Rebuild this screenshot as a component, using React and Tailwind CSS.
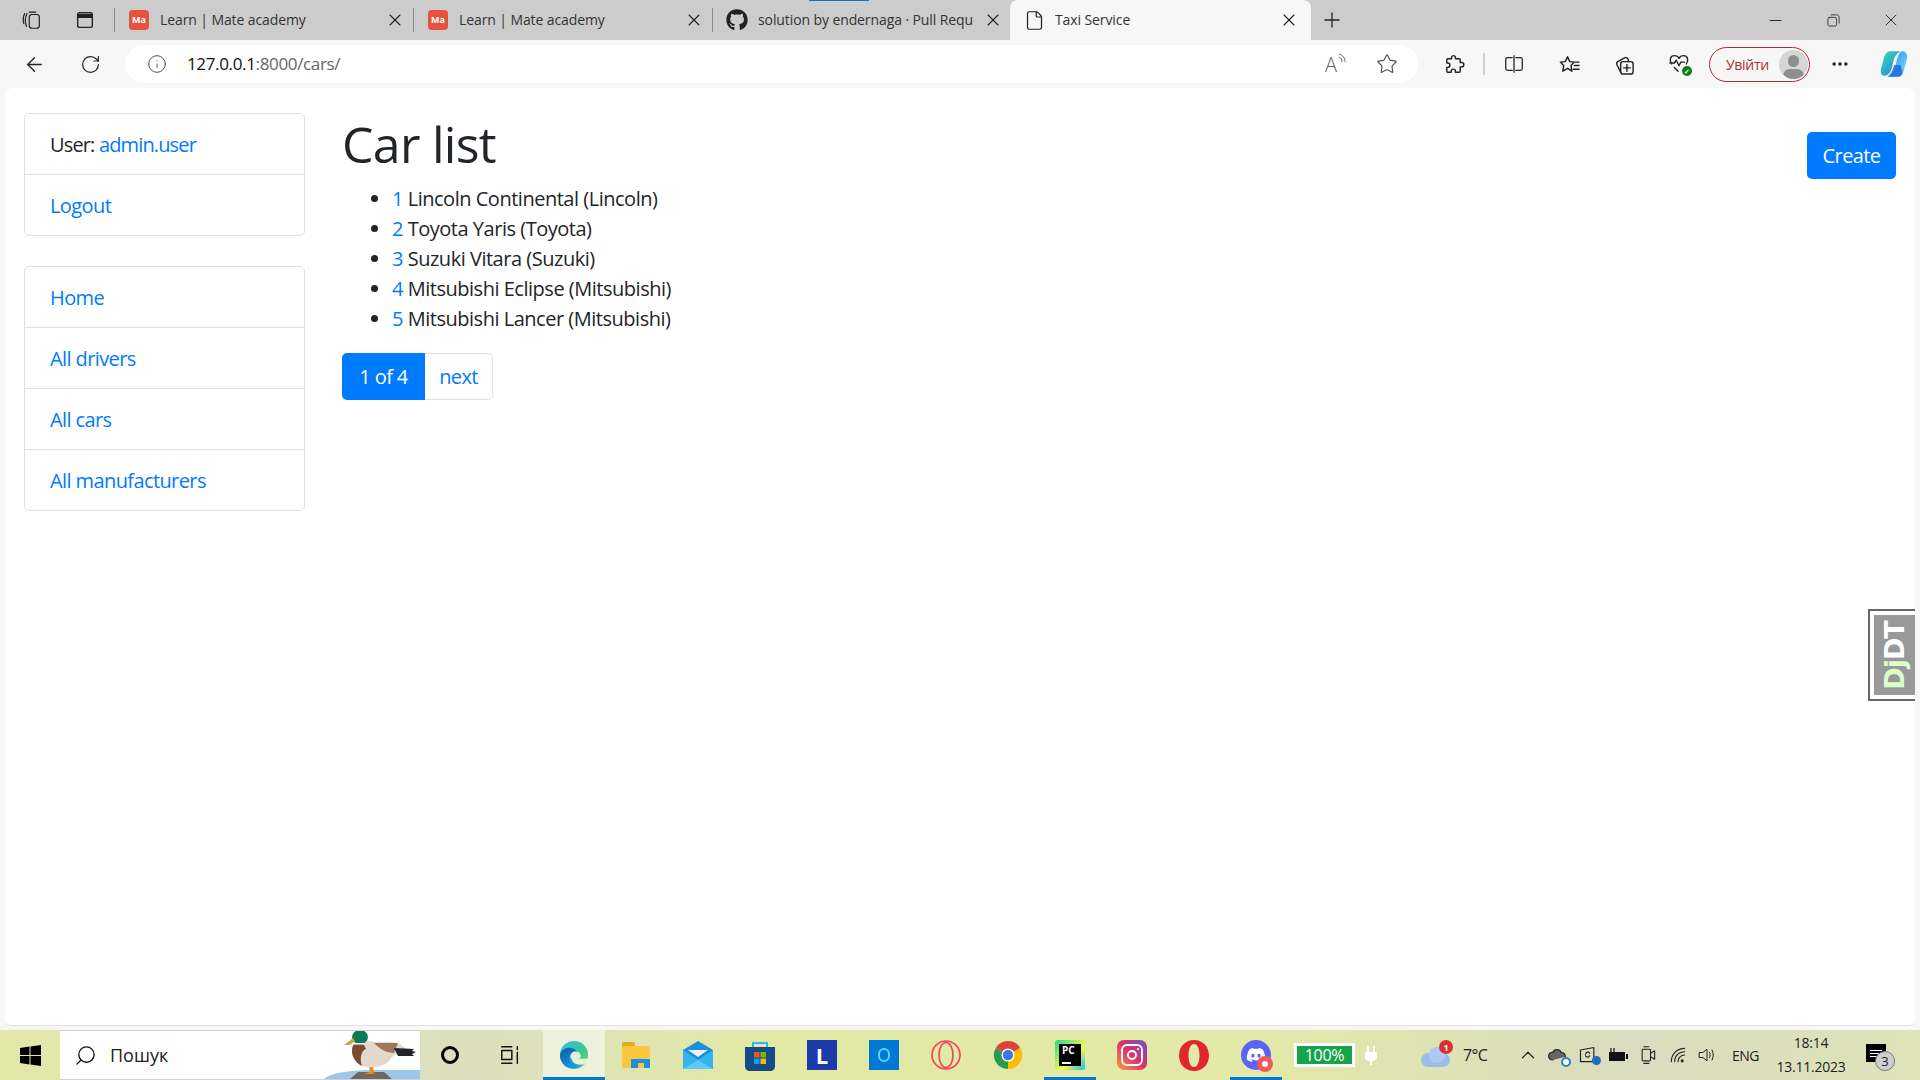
import React from 'react';
import { ArrowLeft, RotateCw, Info, Star, Plus, X, Minus, File, Search, ChevronUp, Ellipsis } from 'lucide-react';
import { FaGithub, FaDiscord } from 'react-icons/fa';

const SANS = "font-['Open_Sans',sans-serif]";
const link = 'text-[#007bff]';

function Tab({ icon, label, active, width, sep, closeGap }) {
  return (
    <div className={`relative flex h-10 items-center shrink-0 ${active ? 'bg-[#f7f7f7] rounded-t-lg' : ''}`} style={{ width }}>
      <div className="w-[24px] flex justify-center ml-[12px] shrink-0">{icon}</div>
      <span className="ml-[9px] flex-1 overflow-hidden whitespace-nowrap pb-[2px] text-[14px] tracking-[-0.1px] text-[#333]">{label}</span>
      <X size={20} strokeWidth={1.3} className="shrink-0 text-[#222]" style={{ marginRight: closeGap }} />
      {sep && <div className="absolute right-0 top-[8px] h-[24px] w-px bg-[#8a8a8a]" />}
    </div>
  );
}

const MateIcon = () => (
  <div className="flex h-[20px] w-[20px] items-center justify-center rounded-[4px] bg-[#e5533d] text-[9px] font-bold text-white">Ma</div>
);

function ToolIcon({ w = 45, children, className = '' }) {
  return <div className={`flex h-full shrink-0 items-center justify-center ${className}`} style={{ width: w }}>{children}</div>;
}

const Stroke = ({ size = 22, children, vb = 24, sw = 1.4, color = '#222' }) => (
  <svg width={size} height={size} viewBox={`0 0 ${vb} ${vb}`} fill="none" stroke={color} strokeWidth={sw} strokeLinecap="round" strokeLinejoin="round">{children}</svg>
);

function NavGroup({ items, className = '' }) {
  return (
    <div className={`flex flex-col rounded-[5px] border border-[#dfdfdf] ${className}`}>
      {items.map((it, i) => (
        <div key={i} className={`px-[25px] pt-[16px] text-[20px] leading-[30px] tracking-[-0.6px] ${i ? 'h-[61px] border-t border-[#dfdfdf]' : 'h-[60px]'}`}>{it}</div>
      ))}
    </div>
  );
}

const cars = [
  ['1', 'Lincoln Continental (Lincoln)'],
  ['2', 'Toyota Yaris (Toyota)'],
  ['3', 'Suzuki Vitara (Suzuki)'],
  ['4', 'Mitsubishi Eclipse (Mitsubishi)'],
  ['5', 'Mitsubishi Lancer (Mitsubishi)'],
];

function TaskCell({ children, active, underline, w = 62 }) {
  return (
    <div className={`relative flex h-full shrink-0 items-center justify-center ${active ? 'bg-[#eef2dc]' : ''}`} style={{ width: w }}>
      {children}
      {underline && <div className={`absolute bottom-0 h-[3px] bg-[#0078d4] ${active ? 'left-0 right-0' : 'left-[5px] right-[5px]'}`} />}
    </div>
  );
}

const Duck = () => (
  <svg className="absolute bottom-0 right-0" width="96" height="50" viewBox="0 0 96 50">
    <path d="M0 50 C8 43 30 41 50 41 L96 41 L96 50 Z" fill="#9cc6ea" />
    <path d="M26 50 L34 43 L60 43 L68 50 Z" fill="#6f6a5f" />
    <path d="M45 36 L46 43 L40 45 L50 45 L49 36 Z" fill="#f08a24" />
    <path d="M28 22 C28 11 36 9 44 12 C56 14 66 12 74 14 L84 21 C72 24 68 27 66 31 C60 39 44 40 36 36 C31 33 28 28 28 22 Z" fill="#e3d8c9" />
    <path d="M28 22 C28 15 32 12 38 12 L42 20 C36 22 36 32 38 37 C32 34 28 28 28 22 Z" fill="#7a4b32" />
    <path d="M50 14 L74 14 L70 24 C62 24 56 20 50 14Z" fill="#a0775c" />
    <path d="M70 19 L90 20 L88 22 L92 23 L88 25 L90 27 L74 27 Z" fill="#22262b" />
    <ellipse cx="36" cy="8" rx="8" ry="7" fill="#0d7a55" />
    <path d="M29 9 L20 16 L26 16 L31 12 Z" fill="#c9a83a" />
    <rect x="30" y="14" width="10" height="1.6" fill="#f5f5f5" />
  </svg>
);

const EdgeLogo = ({ size = 30 }) => (
  <svg width={size} height={size} viewBox="0 0 32 32">
    <defs>
      <linearGradient id="eg1" x1="0" y1="0" x2="1" y2="1"><stop offset="0" stopColor="#35c1f1" /><stop offset="0.6" stopColor="#36c98f" /><stop offset="1" stopColor="#7fe05a" /></linearGradient>
      <linearGradient id="eg2" x1="0" y1="0" x2="0.6" y2="1"><stop offset="0" stopColor="#0c59a4" /><stop offset="1" stopColor="#1b9de2" /></linearGradient>
    </defs>
    <circle cx="16" cy="16" r="15" fill="url(#eg1)" />
    <path d="M1 16 C3 8 13 6 18 11 C21 14 20 18 17 18 L12 18 C10 24 17 29 25 26 C20 32 9 32 4 25 C2 22 1 19 1 16Z" fill="url(#eg2)" />
    <path d="M12 18 C12 13 17 11 21 13 C24 15 24 19 21 20 L31 20 C31 21 30 24 28 25 C22 29 13 27 12 18Z" fill="#eef2dc" opacity="0.95" />
    <path d="M13 19 C14 26 22 28 27 25 C20 30 11 27 11 20Z" fill="#1b9de2" />
  </svg>
);

const Chrome = () => (
  <svg width="30" height="30" viewBox="0 0 32 32">
    <path d="M16 16 L3 8.5 A15 15 0 0 1 29 8.5 Z" fill="#db4437" />
    <path d="M16 16 L16 31 A15 15 0 0 1 3 8.5 Z" fill="#2a9a4f" />
    <path d="M16 16 L29 8.5 A15 15 0 0 1 16 31 Z" fill="#fbbc05" />
    <circle cx="16" cy="16" r="7" fill="#fff" />
    <circle cx="16" cy="16" r="5.5" fill="#3b78e7" />
  </svg>
);

const Copilot = () => (
  <svg width="30" height="30" viewBox="0 0 28 28">
    <defs>
      <linearGradient id="cp1" x1="0" y1="0" x2="1" y2="1"><stop offset="0" stopColor="#3ddcb4" /><stop offset="1" stopColor="#1a7fe0" /></linearGradient>
      <linearGradient id="cp2" x1="0" y1="0" x2="1" y2="1"><stop offset="0" stopColor="#2f7ff0" /><stop offset="1" stopColor="#7de3ff" /></linearGradient>
    </defs>
    <path d="M10 2 H20 C16 4 14 8 13 13 C12 19 10 25 5 25 C2 25 1 22 2 18 L5 7 C6 4 8 2 10 2Z" fill="url(#cp1)" />
    <path d="M22 2 C25 2 27 5 26 9 L23 21 C22 24 20 26 17 26 H8 C13 24 15 19 16 13 C17 8 19 2 22 2Z" fill="url(#cp2)" />
    <path d="M8 26 H18 C20 26 22 24 22 21 L20 15 H14 C13 20 11 24 8 26Z" fill="#1565d8" opacity="0.8" />
  </svg>
);

export default function App() {
  return (
    <div className={`flex h-[1080px] w-[1920px] flex-col overflow-hidden bg-[#f7f7f7] ${SANS}`}>
      {/* tab strip */}
      <div className="relative flex h-10 shrink-0 items-center bg-[#cccccc]">
        <div className="absolute left-[809px] top-0 h-px w-[60px] bg-[#0078d4]" />
        <ToolIcon w={64}>
          <Stroke size={22} sw={1.3}>
            <rect x="9" y="6" width="11" height="15" rx="3" /><path d="M6 19 C4.5 15 4.5 9 6.5 5 M9 3.5 L16 3.5" /><path d="M3 16 C2 12 2.5 8 4 5" />
          </Stroke>
        </ToolIcon>
        <ToolIcon w={42}>
          <Stroke size={22} sw={1.5}>
            <rect x="4" y="4" width="16" height="16" rx="2" /><path d="M4 6 H20 V9 H4Z" fill="#222" />
          </Stroke>
        </ToolIcon>
        <div className="ml-[8px] h-[24px] w-px bg-[#8a8a8a]" />
        <Tab width={299} sep closeGap={9} icon={<MateIcon />} label="Learn | Mate academy" />
        <Tab width={299} sep closeGap={9} icon={<MateIcon />} label="Learn | Mate academy" />
        <Tab width={297} closeGap={7} icon={<FaGithub size={22} color="#222" />} label="solution by endernaga · Pull Requ" />
        <Tab width={301} active closeGap={12} icon={<File size={21} strokeWidth={1.4} color="#222" />} label="Taxi Service" />
        <ToolIcon w={42}><Plus size={24} strokeWidth={1.3} color="#222" /></ToolIcon>
        <div className="flex-1" />
        <ToolIcon w={58}><Minus size={19} strokeWidth={1.2} color="#222" /></ToolIcon>
        <ToolIcon w={58}>
          <Stroke size={15} sw={1.3}><rect x="3" y="7" width="14" height="14" rx="3" /><path d="M8 3 H17 C19.5 3 21 4.5 21 7 V16" /></Stroke>
        </ToolIcon>
        <ToolIcon w={58}><X size={20} strokeWidth={1.1} color="#222" /></ToolIcon>
      </div>

      {/* toolbar */}
      <div className="flex h-[48px] shrink-0 items-center">
        <ToolIcon w={68}><ArrowLeft size={23} strokeWidth={1.4} color="#222" /></ToolIcon>
        <ToolIcon w={44}><RotateCw size={21} strokeWidth={1.4} color="#222" /></ToolIcon>
        <div className="ml-[13px] flex h-[38px] w-[1293px] items-center rounded-[19px] bg-white">
          <Info size={20} strokeWidth={1.2} color="#555" className="ml-[22px]" />
          <span className="ml-[20px] text-[17px] tracking-[-0.35px] text-[#111]">127.0.0.1<span className="text-[#666]">:8000/cars/</span></span>
          <div className="flex-1" />
          <div className="relative mr-[31px] flex h-[22px] w-[20px] items-end">
            <span className="text-[20px] font-light leading-none text-[#666]">A</span>
            <svg className="absolute -right-[2px] top-0" width="9" height="10" viewBox="0 0 9 10" fill="none" stroke="#666" strokeWidth="1"><path d="M1 1 C5 2 7 5 7 9 M1 4 C3 5 4 6 4 9" /></svg>
          </div>
          <Star size={22} strokeWidth={1.3} color="#555" className="mr-[20px]" />
        </div>
        <ToolIcon w={60} className="ml-[5px]">
          <Stroke size={23} sw={1.5}>
            <path d="M10 4 a2.2 2.2 0 0 1 4 0 V6 H18 a1 1 0 0 1 1 1 V10 h1.5 a2.2 2.2 0 0 1 0 4.5 H19 V19 a1 1 0 0 1 -1 1 H14 v-1 a2.2 2.2 0 0 0 -4.4 0 v1 H6 a1 1 0 0 1 -1 -1 V15 H6 a2.2 2.2 0 0 0 0 -4.5 H5 V7 a1 1 0 0 1 1 -1 H10Z" />
          </Stroke>
        </ToolIcon>
        <div className="h-[22px] w-[2px] bg-[#d0d0d0]" />
        <ToolIcon w={57}>
          <Stroke size={22} sw={1.4}><path d="M10 5 H5 a2 2 0 0 0 -2 2 V17 a2 2 0 0 0 2 2 H10 M14 5 H19 a2 2 0 0 1 2 2 V17 a2 2 0 0 1 -2 2 H14 M12 3 V21" /></Stroke>
        </ToolIcon>
        <ToolIcon w={55}>
          <Stroke size={23} sw={1.5}>
            <path d="M10 4 L12.2 9 L17 9.5 L13.5 13 L14.5 19 L10 16 L5 19 L6 13 L2.5 9.5 L7.5 9 Z" /><path d="M17 13 H22 M16 17 H22 M18 9.5 H22" />
          </Stroke>
        </ToolIcon>
        <ToolIcon w={55}>
          <Stroke size={23} sw={1.5}>
            <rect x="8" y="9" width="13" height="13" rx="2.5" /><path d="M14.5 12 V19 M11 15.5 H18" /><path d="M8 20 L4 12 C3.5 10.5 4 9.5 5 9 L12 5 C13.5 4.3 15 5 15.5 6 L16.5 9" />
          </Stroke>
        </ToolIcon>
        <ToolIcon w={55}>
          <div className="relative h-[24px] w-[24px]">
            <Stroke size={22} sw={1.5}>
              <path d="M4 13 C1 9 2.5 4 7 4 C9 4 11 5 12 7 C13 5 15 4 17 4 C21.5 4 23 9 20 13 M2 12 H7 L9 9 L12 15 L14 11 H18 M7 17 L11 21" />
            </Stroke>
            <div className="absolute bottom-0 right-0 flex h-[10px] w-[10px] items-center justify-center rounded-full bg-[#107c10] text-[7px] font-bold leading-none text-white">✓</div>
          </div>
        </ToolIcon>
        <div className="ml-[2px] flex h-[35px] w-[101px] items-center justify-between rounded-[18px] border-[1.5px] border-[#b02a30] pl-[16px] pr-[1px]">
          <span className="text-[14px] tracking-[-0.3px] text-[#b02a30]">Увійти</span>
          <div className="relative h-[29px] w-[29px] overflow-hidden rounded-full bg-[#d6d6d6]">
            <div className="absolute left-[9px] top-[5px] h-[12px] w-[11px] rounded-full bg-[#8e8e8e]" />
            <div className="absolute left-[4px] top-[19px] h-[14px] w-[21px] rounded-full bg-[#8e8e8e]" />
          </div>
        </div>
        <ToolIcon w={60}><Ellipsis size={20} strokeWidth={2.2} color="#222" /></ToolIcon>
        <ToolIcon w={48}><Copilot /></ToolIcon>
      </div>

      {/* page */}
      <div className="relative mx-[5px] flex h-[938px] shrink-0 rounded-t-[8px] rounded-b-[6px] border-b border-[#e2e2e2] bg-white pl-[19px] pr-[19px] pt-[25px] text-[20px] leading-[30px] text-[#212529]">
        <div className="w-[281px] shrink-0">
          <NavGroup items={[
            <span className="tracking-[-0.85px]">User: <span className={link}>admin.user</span></span>,
            <span className={link}>Logout</span>,
          ]} />
          <NavGroup className="mt-[30px]" items={[
            <span className={link}>Home</span>,
            <span className={link}>All drivers</span>,
            <span className={link}>All cars</span>,
            <span className={link}>All manufacturers</span>,
          ]} />
        </div>
        <div className="ml-[37px] flex-1">
          <div className="flex items-start justify-between">
            <h1 className="mt-[1px] text-[50px] font-medium leading-[60px] tracking-[-0.7px]">Car list</h1>
            <div className="mt-[19px] flex h-[47px] w-[89px] items-center justify-center rounded-[5px] bg-[#007bff] tracking-[-0.6px] text-white">Create</div>
          </div>
          <ul className="mt-[5px] list-disc pl-[50px] tracking-[-0.48px]">
            {cars.map(([n, t]) => (
              <li key={n} className="h-[30px]"><span className={link}>{n}</span> {t}</li>
            ))}
          </ul>
          <div className="mt-[19px] flex h-[47px] w-[151px] tracking-[-0.6px]">
            <div className="flex w-[83px] items-center justify-center rounded-l-[5px] bg-[#007bff] text-white">1 of 4</div>
            <div className={`flex flex-1 items-center justify-center rounded-r-[5px] border border-l-0 border-[#dee2e6] ${link}`}>next</div>
          </div>
        </div>
        {/* DjDT handle */}
        <div className="absolute right-0 top-[521px] flex h-[92px] w-[47px] items-center border-2 border-r-0 border-[#666] bg-white py-[4px] pl-[4px]">
          <div className="flex h-[80px] w-full items-center justify-center bg-[#999999]">
            <span className="-rotate-90 whitespace-nowrap font-['DejaVu_Sans',sans-serif] text-[27px] font-bold leading-none tracking-[-1px] text-[#ddffcc]">Dj<span className="text-white">DT</span></span>
          </div>
        </div>
      </div>
      <div className="h-[4px] shrink-0" />

      {/* taskbar */}
      <div className="flex h-[50px] shrink-0 items-center bg-[linear-gradient(90deg,#e3e8a8_0%,#dcdfbf_25%,#e2e9a5_40%,#e3e9a8_65%,#d9dcbf_85%,#dfe3b8_100%)]">
        <div className="flex h-full w-[60px] items-center justify-center">
          <svg width="21" height="21" viewBox="0 0 21 21" fill="#000"><path d="M0 3 L9.5 1.6 V10 H0Z M10.5 1.4 L21 0 V10 H10.5Z M0 11 H9.5 V19.4 L0 18Z M10.5 11 H21 V21 L10.5 19.6Z" /></svg>
        </div>
        <div className="relative flex h-full w-[360px] items-center overflow-hidden border-y border-[#cfcfcf] bg-white">
          <Search size={23} strokeWidth={1.4} color="#111" className="ml-[14px] -scale-x-100" />
          <span className="ml-[13px] text-[18px] text-[#222]">Пошук</span>
          <Duck />
        </div>
        <TaskCell w={60}><div className="h-[18px] w-[18px] rounded-full border-[3px] border-black" /></TaskCell>
        <TaskCell w={60}>
          <Stroke size={22} sw={1.6} color="#111"><path d="M3 3 H14 M3 21 H14 M3 7 H14 V17 H3Z M20 3 V6 M20 9 V21" /></Stroke>
        </TaskCell>
        <div className="w-[3px]" />
        <TaskCell active underline><EdgeLogo /></TaskCell>
        <TaskCell>
          <div className="relative h-[26px] w-[28px]">
            <div className="absolute left-0 top-0 h-[8px] w-[13px] rounded-t-[2px] bg-[#e5a823]" />
            <div className="absolute left-0 top-[4px] h-[22px] w-[28px] rounded-[2px] bg-[#fcc63f]" />
            <div className="absolute bottom-0 right-0 h-[9px] w-[19px] bg-[#1b8fe0]" />
            <div className="absolute bottom-0 right-[6px] h-[5px] w-[6px] bg-[#fcc63f]" />
          </div>
        </TaskCell>
        <TaskCell>
          <svg width="30" height="28" viewBox="0 0 30 28"><path d="M0 9 L15 0 L30 9 V28 H0Z" fill="#1d8fdc" /><path d="M5 9 H25 L15 16Z" fill="#eef2f5" /><path d="M0 9 L15 19 L30 9 V28 H0Z" fill="#35b4f0" /><path d="M0 28 L15 19 L30 28Z" fill="#5fcaf5" /></svg>
        </TaskCell>
        <TaskCell>
          <svg width="30" height="31" viewBox="0 0 30 31">
            <path d="M8 7 V3 H22 V7" fill="none" stroke="#30b4ea" strokeWidth="2" />
            <path d="M0 7 H30 V26 C30 29 28 31 25 31 H5 C2 31 0 29 0 26Z" fill="#154c86" />
            <rect x="9" y="12" width="5.5" height="5.5" fill="#f25022" /><rect x="15.5" y="12" width="5.5" height="5.5" fill="#7fba00" />
            <rect x="9" y="18.5" width="5.5" height="5.5" fill="#00a4ef" /><rect x="15.5" y="18.5" width="5.5" height="5.5" fill="#ffb900" />
          </svg>
        </TaskCell>
        <TaskCell>
          <div className="flex h-[30px] w-[30px] items-center justify-center bg-[#1c3aa9] text-[22px] font-bold leading-none text-white">L</div>
        </TaskCell>
        <TaskCell>
          <div className="flex h-[30px] w-[30px] items-center justify-center bg-[#0078d4]"><div className="h-[14px] w-[12px] rounded-full border-2 border-[#5fd0f5]" /></div>
        </TaskCell>
        <TaskCell>
          <svg width="30" height="30" viewBox="0 0 30 30" fill="none" stroke="#f0475f" strokeWidth="1.7"><circle cx="15" cy="15" r="14" /><ellipse cx="15" cy="15" rx="7" ry="12.5" /></svg>
        </TaskCell>
        <TaskCell><Chrome /></TaskCell>
        <TaskCell underline>
          <div className="relative h-[28px] w-[28px]">
            <div className="absolute -inset-[1px] rounded-[3px] bg-[linear-gradient(135deg,#21d789,#fcf84a_60%,#07c3f2)]" />
            <div className="absolute inset-[3px] flex flex-col bg-black px-[3px] pt-[1px] text-[10px] font-bold leading-[11px] text-white">PC<div className="mt-[6px] h-[2px] w-[9px] bg-white" /></div>
          </div>
        </TaskCell>
        <TaskCell>
          <div className="flex h-[30px] w-[30px] items-center justify-center rounded-[7px] bg-[linear-gradient(45deg,#f9a13a,#e1306c_50%,#6a4fc8)]">
            <div className="relative flex h-[22px] w-[22px] items-center justify-center rounded-[6px] border-2 border-white">
              <div className="h-[10px] w-[10px] rounded-full border-2 border-white" />
              <div className="absolute right-[2px] top-[2px] h-[2px] w-[2px] rounded-full bg-white" />
            </div>
          </div>
        </TaskCell>
        <TaskCell>
          <svg width="30" height="31" viewBox="0 0 30 31"><path fillRule="evenodd" d="M15 0 C24 0 30 7 30 15.5 C30 24 24 31 15 31 C6 31 0 24 0 15.5 C0 7 6 0 15 0Z M15 4 C11 4 9.5 10 9.5 15.5 C9.5 21 11 27 15 27 C19 27 20.5 21 20.5 15.5 C20.5 10 19 4 15 4Z" fill="#e3252d" /></svg>
        </TaskCell>
        <TaskCell underline>
          <div className="relative flex h-[30px] w-[30px] items-center justify-center rounded-full bg-[#5865f2]">
            <FaDiscord size={20} color="#fff" />
            <div className="absolute -bottom-[2px] -right-[2px] flex h-[16px] w-[16px] items-center justify-center rounded-full bg-[#ef5a5a]"><div className="h-[6px] w-[6px] rounded-full bg-white" /></div>
          </div>
        </TaskCell>
        <div className="w-[7px]" />
        {/* tray */}
        <div className="flex h-[24px] w-[61px] items-center justify-center border-[3px] border-white bg-[#16a34a] text-[16px] tracking-[-0.3px] text-white">100%</div>
        <svg className="ml-[10px]" width="12" height="19" viewBox="0 0 12 19" fill="#fff"><rect x="2" y="0" width="2" height="6" /><rect x="8" y="0" width="2" height="6" /><path d="M0 6 H12 V11 C12 14 9 15 7 15 V19 H5 V15 C3 15 0 14 0 11Z" /></svg>
        <div className="relative ml-[44px] h-[24px] w-[30px]">
          <div className="absolute bottom-0 left-0 h-[14px] w-[29px] rounded-full bg-[#9cbdeb]" />
          <div className="absolute bottom-[4px] left-[8px] h-[16px] w-[16px] rounded-full bg-[#aec9f0]" />
          <div className="absolute -top-[3px] right-[-2px] flex h-[14px] w-[14px] items-center justify-center rounded-full bg-[#d9312b] text-[9px] font-bold leading-none text-white">1</div>
        </div>
        <span className="ml-[12px] w-[30px] whitespace-nowrap text-[16px] tracking-[-0.6px] text-[#222]">7°C</span>
        <ChevronUp size={22} strokeWidth={1.3} color="#222" className="ml-[24px]" />
        <div className="ml-[3px] flex items-center">
          <div className="relative flex w-[30px] justify-center">
            <Stroke size={20} sw={1.4}><path d="M7 18 C3 18 2 15 2 13 C2 10 5 8 7 9 C8 5 15 4 17 9 C20 9 22 11 22 14" fill="#666" /></Stroke>
            <div className="absolute -bottom-[2px] right-[1px] h-[10px] w-[10px] rounded-full border-2 border-[#2a7fd0] bg-white" />
          </div>
          <div className="relative flex w-[31px] justify-center">
            <Stroke size={20} sw={1.4}><path d="M3 6 L19 3 V20 H3Z M9 11 C10 8 13 8 14 10 M14 13 C13 15 10 15 9 13" /></Stroke>
            <div className="absolute bottom-0 right-[2px] h-[9px] w-[9px] rounded-full bg-[#1f6fc0]" />
          </div>
          <div className="flex w-[30px] justify-center">
            <svg width="20" height="14" viewBox="0 0 20 14"><path d="M3 0 V4 M6 0 V4" stroke="#111" strokeWidth="1.2" /><rect x="1" y="4" width="16" height="9" fill="#111" /><rect x="18" y="6" width="2" height="5" fill="#111" /></svg>
          </div>
          <div className="flex w-[30px] justify-center">
            <Stroke size={20} sw={1.3}><rect x="5" y="5" width="10" height="14" rx="1" /><path d="M15 10 L20 7 V17 L15 14 M7 2 H13 M7 22 H13" /></Stroke>
          </div>
          <div className="flex w-[29px] justify-center">
            <Stroke size={20} sw={1.3}><path d="M4 20 C4 11 11 4 20 4 M8 20 C8 13 13 8 20 8 M12 20 C12 16 15 12 20 12" /><circle cx="17" cy="19" r="1.2" fill="#222" /></Stroke>
          </div>
          <div className="flex w-[29px] justify-center">
            <Stroke size={20} sw={1.2}><path d="M3 9 H7 L12 5 V19 L7 15 H3Z M15 9 C16 11 16 13 15 15 M18 6 C20 10 20 14 18 18" /></Stroke>
          </div>
        </div>
        <span className="ml-[11px] w-[28px] text-[14px] tracking-[-0.5px] text-[#222]">ENG</span>
        <div className="ml-[15px] flex w-[72px] flex-col items-center text-[14px] leading-[24px] tracking-[-0.25px] text-[#222]">
          <span>18:14</span><span>13.11.2023</span>
        </div>
        <div className="relative ml-[19px] h-[22px] w-[20px]">
          <div className="flex h-[18px] w-[20px] flex-col items-center justify-center gap-[2px] bg-black">
            <div className="h-px w-[12px] bg-white" /><div className="h-px w-[12px] bg-white" /><div className="h-px w-[12px] bg-white" />
          </div>
          <div className="absolute -bottom-[5px] -right-[9px] flex h-[20px] w-[20px] items-center justify-center rounded-full border border-[#777] bg-[#cfcfcf] text-[13px] leading-none text-[#222]">3</div>
        </div>
      </div>
    </div>
  );
}
